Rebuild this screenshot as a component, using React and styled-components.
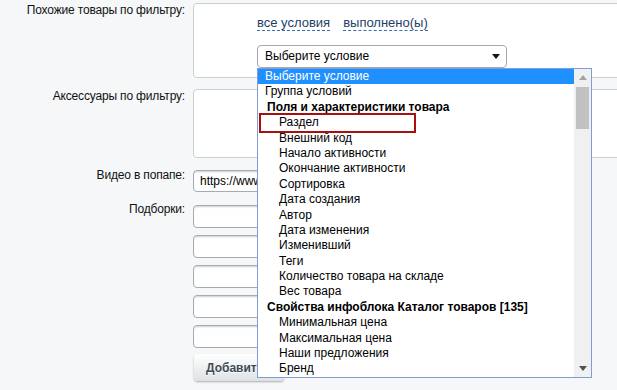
import React from 'react';
import styled, { createGlobalStyle } from 'styled-components';

const Global = createGlobalStyle`
  html, body { margin: 0; padding: 0; background: #f5f7f8; overflow: hidden; }
  body { font-family: "Liberation Sans", Arial, sans-serif; font-size: 12px; color: #000; }
  * { box-sizing: border-box; }
`;

const Page = styled.div`
  position: relative;
  width: 700px;
  height: 390px;
  padding-top: 3px;
`;

const Row = styled.div`
  display: grid;
  grid-template-columns: 185px 1fr;
  column-gap: 8px;
  align-items: start;
  margin-top: ${p => p.$mt || 0}px;
`;

const Label = styled.div`
  text-align: right;
  line-height: 15px;
  font-size: 12px;
  letter-spacing: -0.17px;
  color: #111;
  margin-top: ${p => p.$mt || 0}px;
`;

const Panel = styled.div`
  height: ${p => p.$h}px;
  background: #fff;
  border: 1px solid #c8d0d4;
  border-radius: 4px;
  padding: 11px 0 0 63px;
`;

const LinkRow = styled.div`
  display: flex;
  gap: 13px;
  height: 16px;
`;

const DashedLink = styled.span`
  display: inline-block;
  font-size: 13px;
  line-height: 15px;
  color: #1d3f6a;
  border-bottom: 1px dashed #3a6fb5;
`;

const FakeSelect = styled.div`
  margin-top: 14px;
  width: 250px;
  height: 23px;
  border: 1px solid #a8a8a8;
  border-radius: 4px;
  background: #fff;
  display: flex;
  align-items: center;
  justify-content: space-between;
  padding: 0 6px 0 7px;
  line-height: 15px;
`;

const TextInput = styled.div`
  width: 300px;
  height: ${p => p.$h || 23}px;
  background: #fff;
  border: 1px solid #a3acb2;
  border-radius: 4px;
  box-shadow: inset 0 2px 2px -1px rgba(180, 188, 191, 0.7);
  padding: 0 6px;
  display: flex;
  align-items: center;
  color: #000;
`;

const Stack = styled.div`
  display: flex;
  flex-direction: column;
  align-items: flex-start;
  gap: 7px;
`;

const Button = styled.div`
  margin-top: -1px;
  margin-left: 1px;
  width: 90px;
  height: 27px;
  padding: 0 12px;
  display: flex;
  align-items: center;
  border-radius: 4px;
  background: linear-gradient(#ffffff, #dce2e5);
  box-shadow: 0 1px 2px rgba(0, 0, 0, 0.3), inset 0 1px 0 #fff;
  color: #3f4b54;
  font-weight: 700;
  text-shadow: 0 1px #fff;
`;

const Dropdown = styled.div`
  position: absolute;
  left: 257px;
  top: 68px;
  width: 335px;
  height: 310px;
  border: 1px solid #7f9dd3;
  background: #fff;
  display: flex;
`;

const List = styled.div`
  flex: 1;
  overflow: hidden;
`;

const Option = styled.div`
  height: 15.4px;
  line-height: 15.4px;
  white-space: nowrap;
  padding-left: ${p => (p.$sub ? 21 : p.$group ? 9 : 7)}px;
  font-weight: ${p => (p.$group ? 700 : 400)};
  background: ${p => (p.$sel ? '#1e90ff' : 'transparent')};
  color: ${p => (p.$sel ? '#fff' : '#000')};
`;

const Scrollbar = styled.div`
  width: 17px;
  background: #f0f0f0;
  display: flex;
  flex-direction: column;
  align-items: center;
`;

const ArrowBtn = styled.div`
  width: 17px;
  height: 17px;
  display: flex;
  align-items: center;
  justify-content: center;
  margin-top: ${p => (p.$bottom ? 'auto' : '0')};
`;

const Thumb = styled.div`
  margin-top: 1px;
  width: 13px;
  height: 42px;
  background: #c1c1c1;
`;

const Highlight = styled.div`
  position: absolute;
  left: 1px;
  top: 44px;
  width: 157px;
  height: 20px;
  border: 2px solid #a80f0f;
  pointer-events: none;
`;

const Tri = ({ up, color }) => (
  <svg width="8" height="5" viewBox="0 0 8 5">
    <path d={up ? 'M0 5 L4 0 L8 5 Z' : 'M0 0 L8 0 L4 5 Z'} fill={color} />
  </svg>
);

const items = [
  { t: 'Выберите условие', sel: true },
  { t: 'Группа условий' },
  { t: 'Поля и характеристики товара', group: true },
  { t: 'Раздел', sub: true },
  { t: 'Внешний код', sub: true },
  { t: 'Начало активности', sub: true },
  { t: 'Окончание активности', sub: true },
  { t: 'Сортировка', sub: true },
  { t: 'Дата создания', sub: true },
  { t: 'Автор', sub: true },
  { t: 'Дата изменения', sub: true },
  { t: 'Изменивший', sub: true },
  { t: 'Теги', sub: true },
  { t: 'Количество товара на складе', sub: true },
  { t: 'Вес товара', sub: true },
  { t: 'Свойства инфоблока Каталог товаров [135]', group: true },
  { t: 'Минимальная цена', sub: true },
  { t: 'Максимальная цена', sub: true },
  { t: 'Наши предложения', sub: true },
  { t: 'Бренд', sub: true },
  { t: 'Производитель', sub: true },
];

export default function App() {
  return (
    <>
      <Global />
      <Page>
        <Row>
          <Label $mt={0}>Похожие товары по фильтру:</Label>
          <Panel $h={75}>
            <LinkRow>
              <DashedLink>все условия</DashedLink>
              <DashedLink>выполнено(ы)</DashedLink>
            </LinkRow>
            <FakeSelect>
              <span>Выберите условие</span>
              <Tri color="#111" />
            </FakeSelect>
          </Panel>
        </Row>
        <Row $mt={11}>
          <Label $mt={0}>Аксессуары по фильтру:</Label>
          <Panel $h={69} />
        </Row>
        <Row $mt={12}>
          <Label $mt={-2}>Видео в попапе:</Label>
          <TextInput $h={22}>https://www.youtube.com/</TextInput>
        </Row>
        <Row $mt={13}>
          <Label $mt={-3}>Подборки:</Label>
          <Stack>
            <TextInput />
            <TextInput />
            <TextInput />
            <TextInput />
            <TextInput />
            <Button>Добавить</Button>
          </Stack>
        </Row>
        <Dropdown>
          <List>
            {items.map((it, i) => (
              <Option key={i} $sel={it.sel} $group={it.group} $sub={it.sub}>
                {it.t}
              </Option>
            ))}
          </List>
          <Scrollbar>
            <ArrowBtn><Tri up color="#a3a3a3" /></ArrowBtn>
            <Thumb />
            <ArrowBtn $bottom><Tri color="#505050" /></ArrowBtn>
          </Scrollbar>
          <Highlight />
        </Dropdown>
      </Page>
    </>
  );
}
